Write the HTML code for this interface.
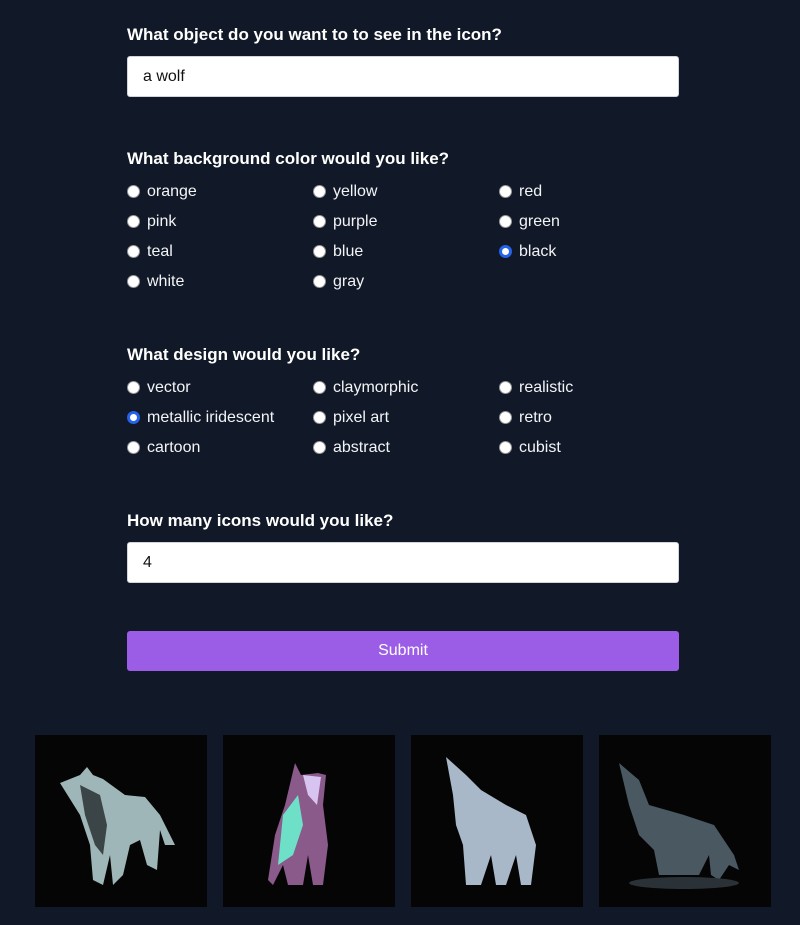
<!DOCTYPE html>
<html><head><style>
body{margin:0;background:#111827;font-family:"Liberation Sans",Arial,sans-serif;color:#fff;width:800px;height:925px;overflow:hidden;position:relative}
.l{position:absolute;left:127px;font-weight:bold;font-size:17px;line-height:20px}
.in{position:absolute;left:127px;background:#fff;border:1px solid #d1d5db;border-radius:3px;color:#111;font-size:16px;line-height:39px;padding-left:15px;box-sizing:border-box;width:552px;height:41px}
.r{position:absolute;font-size:16px;line-height:20px;color:#f3f4f6}
.r:before{content:"";position:absolute;left:-20px;top:3px;width:13px;height:13px;border-radius:50%;background:#fff;border:0.5px solid #999;box-sizing:border-box}
.r.c:before{background:#fff;border:3.5px solid #2563eb}
.btn{position:absolute;left:127px;top:631px;width:552px;height:40px;background:#9b5de5;border-radius:3px;text-align:center;line-height:40px;font-size:16px;color:#fff}
.img{position:absolute;top:735px;width:172px;height:172px;background:#050505}
</style></head><body>
<div class="l" style="top:25px">What object do you want to to see in the icon?</div>
<div class="in" style="top:56px">a wolf</div>
<div class="l" style="top:149px">What background color would you like?</div>
<div class="r" style="left:147px;top:182px">orange</div><div class="r" style="left:333px;top:182px">yellow</div><div class="r" style="left:519px;top:182px">red</div>
<div class="r" style="left:147px;top:212px">pink</div><div class="r" style="left:333px;top:212px">purple</div><div class="r" style="left:519px;top:212px">green</div>
<div class="r" style="left:147px;top:242px">teal</div><div class="r" style="left:333px;top:242px">blue</div><div class="r c" style="left:519px;top:242px">black</div>
<div class="r" style="left:147px;top:272px">white</div><div class="r" style="left:333px;top:272px">gray</div>
<div class="l" style="top:345px">What design would you like?</div>
<div class="r" style="left:147px;top:378px">vector</div><div class="r" style="left:333px;top:378px">claymorphic</div><div class="r" style="left:519px;top:378px">realistic</div>
<div class="r c" style="left:147px;top:408px">metallic iridescent</div><div class="r" style="left:333px;top:408px">pixel art</div><div class="r" style="left:519px;top:408px">retro</div>
<div class="r" style="left:147px;top:438px">cartoon</div><div class="r" style="left:333px;top:438px">abstract</div><div class="r" style="left:519px;top:438px">cubist</div>
<div class="l" style="top:511px">How many icons would you like?</div>
<div class="in" style="top:542px">4</div>
<div class="btn">Submit</div>
<div class="img" style="left:35px"><svg width="172" height="172"><path d="M25 48 L45 40 L52 32 L58 40 L68 44 L90 60 L110 62 L125 80 L140 110 L130 110 L125 95 L122 135 L112 130 L105 105 L95 110 L88 140 L78 150 L75 120 L68 150 L58 145 L55 110 L45 80 Z" fill="#9fb6b8"/><path d="M45 50 L65 60 L72 90 L68 120 L60 110 L50 80 Z" fill="#3b4446"/></svg></div>
<div class="img" style="left:223px"><svg width="172" height="172"><path d="M72 28 L78 40 L95 38 L103 40 L100 70 L105 110 L100 150 L90 150 L85 120 L80 150 L65 150 L60 130 L50 150 L45 145 L52 100 L62 70 Z" fill="#8a5a8a"/><path d="M60 80 L75 60 L80 90 L70 120 L55 130 Z" fill="#6fe0c8"/><path d="M80 40 L98 42 L94 70 L85 60 Z" fill="#d8c4f0"/></svg></div>
<div class="img" style="left:411px"><svg width="172" height="172"><path d="M35 22 L55 40 L70 55 L95 70 L115 80 L125 110 L120 150 L110 150 L105 120 L95 150 L85 150 L80 120 L70 150 L55 150 L52 110 L45 90 L42 60 Z" fill="#a8b8c8"/></svg></div>
<div class="img" style="left:599px"><svg width="172" height="172"><path d="M20 28 L40 45 L50 70 L85 80 L115 90 L135 120 L140 135 L130 130 L120 145 L112 140 L110 120 L100 140 L60 140 L55 115 L40 100 L30 70 Z" fill="#4a5862"/><ellipse cx="85" cy="148" rx="55" ry="6" fill="#2a3238"/></svg></div>
</body></html>
